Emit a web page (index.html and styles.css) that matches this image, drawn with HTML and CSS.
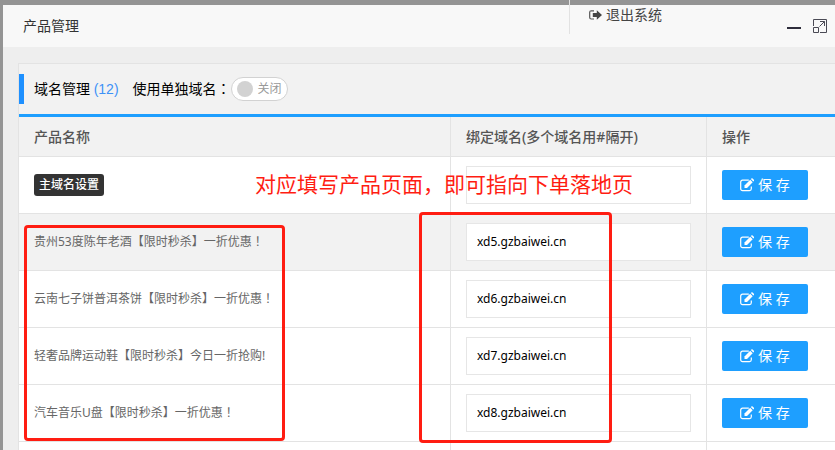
FILE: index.html
```html
<!DOCTYPE html>
<html lang="zh-CN">
<head>
<meta charset="utf-8">
<title>产品管理</title>
<link rel="stylesheet" href="styles.css">
</head>
<body>
<svg class="defs" aria-hidden="true">
  <symbol id="edit" viewBox="0 0 14 14">
    <path d="M11.300 8.500v2.300a1.800 1.800 0 0 1-1.800 1.800H2.500A1.800 1.800 0 0 1 .7 10.800V4a1.800 1.800 0 0 1 1.800-1.800h6.300" fill="none" stroke="currentColor" stroke-width="1.200"/>
    <path d="M10.200 1.700l2.500 2.500-5.700 5.700H4.500V7.400z" fill="currentColor"/>
    <path d="M10.800 1.100l.6-.6q.6-.5 1.200 0l1.300 1.300q.5.600 0 1.200l-.6.600z" fill="currentColor"/>
  </symbol>
</svg>
<main class="window">
  <header class="titlebar">
    <h1>产品管理</h1>
    <div class="controls">
      <button type="button" aria-label="最小化"><svg width="14" height="14" viewBox="0 0 14 14"><path d="M0 9h14" stroke="#2e2d3c" stroke-width="2"/></svg></button>
      <button type="button" aria-label="最大化"><svg width="14" height="14" viewBox="0 0 14 14" fill="none" stroke="#4a4a55"><path d="M.5 7V.5h13v13H7M.5 8.500h5v5h-5zM6.500 7.500l5-5M7 2.500h4.500V7"/></svg></button>
    </div>
  </header>
  <section class="panel">
    <div class="heading">
      <h2>域名管理 <span class="count">(12)</span></h2>
      <span>使用单独域名<span class="punct" lang="zh-TW">：</span></span>
      <button type="button" class="switch" role="switch" aria-checked="false"><span class="knob"></span>关闭</button>
    </div>
    <table>
      <colgroup><col class="name"><col class="domain"><col></colgroup>
      <thead><tr><th>产品名称</th><th>绑定域名(多个域名用#隔开)</th><th>操作</th></tr></thead>
      <tbody>
        <tr>
          <td><span class="badge">主域名设置</span></td>
          <td><input type="text" aria-label="主域名"></td>
          <td><button type="button" class="save"><svg><use href="#edit"/></svg>保 存</button></td>
        </tr>
        <tr>
          <td><label for="d5">贵州53度陈年老酒【限时秒杀】一折优惠<span class="punct" lang="zh-TW">！</span></label></td>
          <td><input type="text" id="d5" value="xd5.gzbaiwei.cn"></td>
          <td><button type="button" class="save"><svg><use href="#edit"/></svg>保 存</button></td>
        </tr>
        <tr>
          <td><label for="d6">云南七子饼普洱茶饼【限时秒杀】一折优惠<span class="punct" lang="zh-TW">！</span></label></td>
          <td><input type="text" id="d6" value="xd6.gzbaiwei.cn"></td>
          <td><button type="button" class="save"><svg><use href="#edit"/></svg>保 存</button></td>
        </tr>
        <tr>
          <td><label for="d7">轻奢品牌运动鞋【限时秒杀】今日一折抢购!</label></td>
          <td><input type="text" id="d7" value="xd7.gzbaiwei.cn"></td>
          <td><button type="button" class="save"><svg><use href="#edit"/></svg>保 存</button></td>
        </tr>
        <tr>
          <td><label for="d8">汽车音乐U盘【限时秒杀】一折优惠<span class="punct" lang="zh-TW">！</span></label></td>
          <td><input type="text" id="d8" value="xd8.gzbaiwei.cn"></td>
          <td><button type="button" class="save"><svg><use href="#edit"/></svg>保 存</button></td>
        </tr>
        <tr><td></td><td></td><td></td></tr>
      </tbody>
    </table>
  </section>
</main>
<a class="logout" href="#"><svg width="13" height="10" viewBox="0 0 13 10"><path d="M5 .8H2.200Q.7.8.7 2.300v5.200Q.7 9 2.200 9H5" fill="none" stroke="#555" stroke-width="1.200"/><path d="M3.800 3h4V.3L13 5 7.800 9.700V7h-4z" fill="#444"/></svg>退出系统</a>
<p class="note">对应填写产品页面，即可指向下单落地页</p>
<div class="mark mark-names"></div>
<div class="mark mark-domains"></div>
</body>
</html>
```

FILE: styles.css
```css
* { box-sizing: border-box; }
body {
  margin: 0;
  padding: 5px 0 0 3px;
  height: 100vh;
  overflow: hidden;
  position: relative;
  background: #949494;
  font: 14px/20px "Noto Sans", "Noto Sans CJK SC", sans-serif;
  color: #000;
}
button, input { font: inherit; }
.defs { display: none; }
.punct { font-family: "Noto Sans CJK TC", sans-serif; line-height: 1; }
.window { height: 100%; overflow: hidden; background: #eee; }
.titlebar {
  display: flex;
  align-items: center;
  justify-content: space-between;
  height: 42px;
  padding: 0 8px 0 20px;
  background: #f8f8f8;
}
h1, h2 { margin: 0; font-size: 14px; font-weight: 400; }
h1 { color: #333; }
.controls { display: flex; gap: 12px; }
.controls button { display: flex; padding: 0; border: 0; background: none; }
.panel {
  margin: 16px 0 0 15px;
  border: solid #e3e3e3;
  border-width: 1px 0 0 1px;
  background: #f2f2f2;
}
.heading { display: flex; align-items: center; height: 50px; }
.heading h2 {
  padding-left: 10px;
  margin-right: 14px;
  border-left: 5px solid #1e90ff;
  line-height: 30px;
}
.count { font-family: "Liberation Sans", sans-serif; color: #3d91f7; }
.switch {
  display: flex;
  align-items: center;
  gap: 5px;
  height: 24px;
  padding: 0 5px;
  border: 1px solid #d2d2d2;
  border-radius: 12px;
  background: #fff;
  color: #999;
  font-size: 12px;
}
.knob { width: 16px; height: 16px; border-radius: 50%; background: #d2d2d2; }
table {
  width: 100%;
  table-layout: fixed;
  border-collapse: separate;
  border-spacing: 0;
  border-top: 3px solid #1e9fff;
}
.name { width: 432px; }
.domain { width: 256px; }
th, td {
  padding: 0 15px;
  border: solid #e3e3e3;
  border-width: 0 1px 1px 0;
  text-align: left;
}
th:last-child, td:last-child { border-right: 0; }
th { height: 40px; font-weight: 500; color: #555; }
td { height: 57px; font-size: 12px; color: #666; }
tbody tr { background: #fff; }
tbody tr:nth-child(2) { background: #f2f2f2; }
.badge {
  display: inline-block;
  padding: 1px 5px;
  border-radius: 3px;
  background: #333;
  color: #fff;
  font-weight: 500;
}
input {
  display: block;
  width: 100%;
  height: 38px;
  padding: 0 10px 2px;
  border: 1px solid #e6e6e6;
  background: #fff;
  color: #000;
}
.save {
  display: flex;
  align-items: center;
  gap: 4px;
  height: 30px;
  padding: 0 18px;
  border: 0;
  border-radius: 2px;
  background: #1e9fff;
  color: #fff;
  font-size: 14px;
  white-space: nowrap;
}
.save svg { width: 14px; height: 14px; }
.logout {
  position: absolute;
  top: 0;
  left: 569px;
  display: flex;
  align-items: center;
  gap: 4px;
  height: 34px;
  padding: 0 0 4px 19px;
  border-left: 1px solid #e2e2e2;
  color: #444;
  text-decoration: none;
}
.note {
  position: absolute;
  top: 169px;
  left: 255px;
  margin: 0;
  font-size: 21px;
  line-height: 30px;
  color: #ff1d12;
  white-space: nowrap;
}
.mark { position: absolute; border: 3px solid #ff1d12; border-radius: 4px; }
.mark-names { top: 225px; left: 24px; width: 261px; height: 216px; }
.mark-domains { top: 212px; left: 419px; width: 193px; height: 231px; }
```
